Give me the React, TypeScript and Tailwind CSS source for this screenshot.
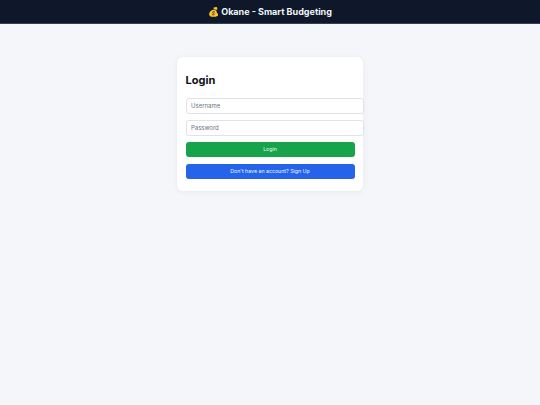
export default function App() {
  return (
    <div className="min-h-[405px] bg-[#f4f6fa] font-['Inter',sans-serif]">
      <header className="h-6 bg-[#0f172a] border-b border-[#334155] flex items-center justify-center">
        <h1 className="text-[9px] font-bold text-[#f1f5f9]">💰 Okane - Smart Budgeting</h1>
      </header>

      <main className="flex justify-center pt-[33px]">
        <div className="w-[186px] h-[134px] bg-white rounded-md shadow-[0_1px_6px_rgba(0,0,0,0.06)] pl-[8.5px] pt-[16px]">
          <h2 className="text-[11px] leading-[15px] font-bold text-[#0b0f19] mb-[10px]">Login</h2>
          <div className="flex flex-col">
            <input
              placeholder="Username"
              className="w-[178px] h-[15.5px] px-[4.5px] text-[6px] bg-white border border-[#e0e2e7] rounded-[3px] placeholder:text-[#6b7280] mb-[6.5px]"
            />
            <input
              placeholder="Password"
              className="w-[178px] h-[15.5px] px-[4.5px] text-[6px] bg-white border border-[#e0e2e7] rounded-[3px] placeholder:text-[#6b7280] mb-[6.5px]"
            />
            <button className="w-[169px] h-[15px] bg-[#16a34a] text-[#f1f5f9] text-[5.25px] rounded-[3px] mb-[7px]">Login</button>
            <button className="w-[169px] h-[15px] bg-[#2563eb] text-[#f1f5f9] text-[5.25px] rounded-[3px]">Don't have an account? Sign Up</button>
          </div>
        </div>
      </main>
    </div>
  );
}
